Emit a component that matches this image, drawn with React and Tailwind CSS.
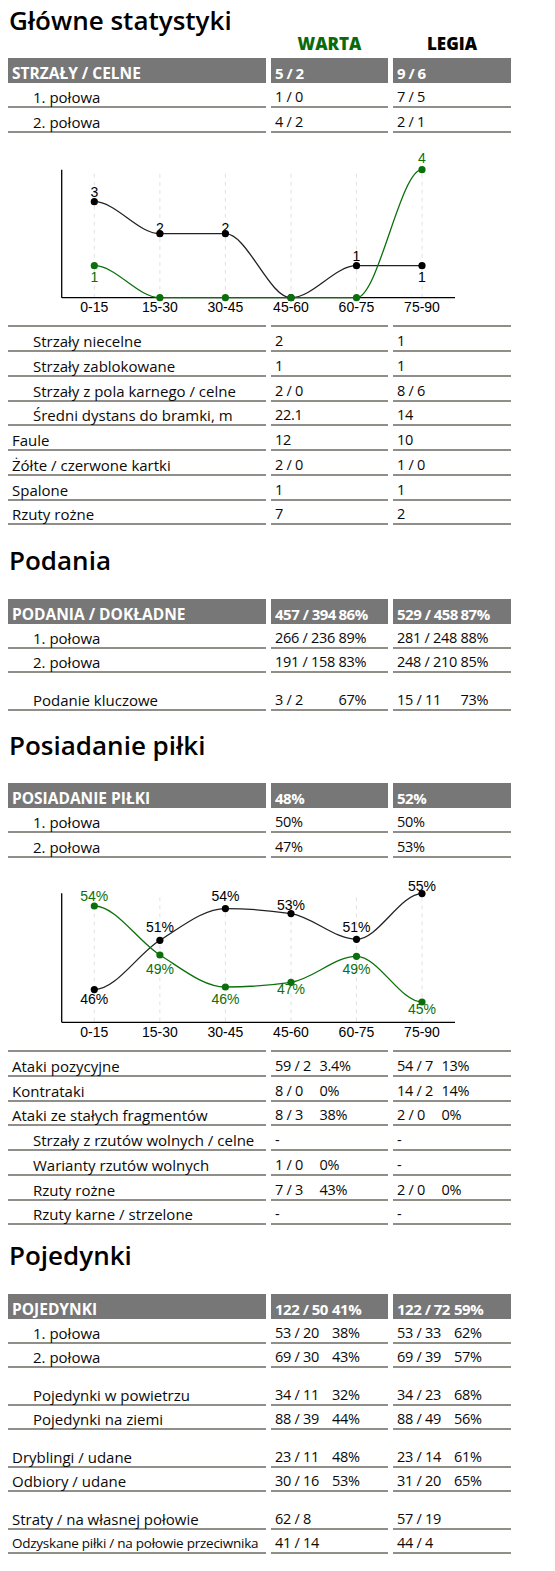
import React from 'react';

const GREEN = '#0b700b';

function monoPath(pts) {
  const n = pts.length;
  const t = new Array(n).fill(0);
  const sg = (v) => (v < 0 ? -1 : 1);
  for (let i = 1; i < n - 1; i++) {
    const [x0, y0] = pts[i - 1];
    const [x1, y1] = pts[i];
    const [x2, y2] = pts[i + 1];
    const h0 = x1 - x0;
    const h1 = x2 - x1;
    const s0 = (y1 - y0) / h0;
    const s1 = (y2 - y1) / h1;
    const p = (s0 * h1 + s1 * h0) / (h0 + h1);
    t[i] = (sg(s0) + sg(s1)) * Math.min(Math.abs(s0), Math.abs(s1), 0.5 * Math.abs(p)) || 0;
  }
  let d = `M${pts[0][0]},${pts[0][1]}`;
  for (let i = 0; i < n - 1; i++) {
    const [x0, y0] = pts[i];
    const [x1, y1] = pts[i + 1];
    const dx = (x1 - x0) / 3;
    d += ` C${x0 + dx},${y0 + dx * t[i]} ${x1 - dx},${y1 - dx * t[i + 1]} ${x1},${y1}`;
  }
  return d;
}

const XS = [94.3, 159.9, 225.4, 291, 356.5, 422];
const XL = ['0-15', '15-30', '30-45', '45-60', '60-75', '75-90'];

function Chart({ black, green, axisTop, axisY, labels }) {
  const bp = black.map((y, i) => [XS[i], y]);
  const gp = green.map((y, i) => [XS[i], y]);
  return (
    <svg className="block ml-[8px]" width="503" height="192.5" viewBox="8 0 503 192.5">
      {XS.map((x) => (
        <line key={x} x1={x} x2={x} y1={axisTop + 4} y2={axisY} stroke="#e2e2e2" strokeWidth="1" strokeDasharray="4 4" />
      ))}
      <line x1="61.7" x2="61.7" y1={axisTop} y2={axisY} stroke="#000" strokeWidth="1.3" />
      <line x1="61.7" x2="455" y1={axisY} y2={axisY} stroke="#000" strokeWidth="1.3" />
      <path d={monoPath(bp)} fill="none" stroke="#222" strokeWidth="1.3" />
      <path d={monoPath(gp)} fill="none" stroke={GREEN} strokeWidth="1.3" />
      {bp.map(([x, y], i) => (
        <circle key={'b' + i} cx={x} cy={y} r="3.6" fill="#000" />
      ))}
      {gp.map(([x, y], i) => (
        <circle key={'g' + i} cx={x} cy={y} r="3.6" fill={GREEN} />
      ))}
      {labels.map((l, i) => (
        <text
          key={'l' + i}
          x={XS[l.i]}
          y={l.y}
          textAnchor="middle"
          fontFamily="'Liberation Sans', Arial, sans-serif"
          fontSize="14"
          fill={l.g ? GREEN : '#000'}
        >
          {l.t}
        </text>
      ))}
      {XL.map((t, i) => (
        <text
          key={t}
          x={XS[i]}
          y={axisY + 14.3}
          textAnchor="middle"
          fontFamily="'Liberation Sans', Arial, sans-serif"
          fontSize="14"
          fill="#000"
        >
          {t}
        </text>
      ))}
    </svg>
  );
}

const GRID = 'grid grid-cols-[258px_117px_118px] gap-x-[5px] ml-[8px] w-[503px]';
const CELL = 'h-[24.75px] border-b-2 border-[#8f8e88] flex items-end leading-[18px] whitespace-nowrap';

function Val({ v, w }) {
  if (Array.isArray(v)) {
    return (
      <>
        <span className={'inline-block ' + w}>{v[0]}</span>
        <span>{v[1]}</span>
      </>
    );
  }
  return <span>{v}</span>;
}

function Row({ label, indent, a, b, w = '', small }) {
  return (
    <div className={GRID}>
      <div className={CELL + (indent ? ' pl-[25px]' : ' pl-[4px]') + (small ? ' text-[13.5px] tracking-[-0.25px]' : ' text-[15px]')}>
        {label}
      </div>
      <div className={CELL + ' pl-[4px] tracking-[-0.3px]'}>
        <Val v={a} w={w} />
      </div>
      <div className={CELL + ' pl-[4px] tracking-[-0.3px]'}>
        <Val v={b} w={w} />
      </div>
    </div>
  );
}

function Head({ label, a, b, w = '' }) {
  const c = 'h-[25px] bg-[#777777] text-white font-bold leading-[16px] flex items-end pb-[2px] pl-[4px] whitespace-nowrap';
  return (
    <div className={GRID}>
      <div className={c + ' text-[15.5px]'}>{label}</div>
      <div className={c + ' text-[15px] tracking-[-0.5px]'}>
        <Val v={a} w={w} />
      </div>
      <div className={c + ' text-[15px] tracking-[-0.5px]'}>
        <Val v={b} w={w} />
      </div>
    </div>
  );
}

function LineRow() {
  const c = 'border-b-2 border-[#8f8e88]';
  return (
    <div className={GRID}>
      <div className={c} />
      <div className={c} />
      <div className={c} />
    </div>
  );
}

function Title({ children, mt = '' }) {
  return (
    <h2 className={'pl-[9px] pt-[4px] h-[36px] text-[26px] leading-[32px] font-semibold text-black ' + mt}>{children}</h2>
  );
}

function Spacer() {
  return <div className="h-[12.5px]" />;
}

export default function App() {
  const c1top = 132.3;
  const ch1 = (v) => 297 - 32 * v - c1top;
  const lab1 = [
    { i: 0, y: 196.7 - c1top, t: '3' },
    { i: 0, y: 281.3 - c1top, t: '1', g: true },
    { i: 1, y: 232.3 - c1top, t: '2' },
    { i: 2, y: 232.3 - c1top, t: '2' },
    { i: 4, y: 260 - c1top, t: '1' },
    { i: 5, y: 162.7 - c1top, t: '4', g: true },
    { i: 5, y: 281.3 - c1top, t: '1' },
  ];
  const c2top = 857.7;
  const bl2 = [989.3, 940, 908.3, 913.3, 939, 893.3].map((y) => y - c2top);
  const gr2 = [905.7, 954.7, 986.7, 982, 956, 1001.7].map((y) => y - c2top);
  const lab2 = [
    { i: 0, y: 900.7, t: '54%', g: true },
    { i: 0, y: 1004, t: '46%' },
    { i: 1, y: 931.7, t: '51%' },
    { i: 1, y: 973.3, t: '49%', g: true },
    { i: 2, y: 900.7, t: '54%' },
    { i: 2, y: 1004, t: '46%', g: true },
    { i: 3, y: 910, t: '53%' },
    { i: 3, y: 993.3, t: '47%', g: true },
    { i: 4, y: 931.7, t: '51%' },
    { i: 4, y: 973.3, t: '49%', g: true },
    { i: 5, y: 890.7, t: '55%' },
    { i: 5, y: 1014, t: '45%', g: true },
  ].map((l) => ({ ...l, y: l.y - c2top }));

  const wP = 'w-[63.5px]';
  const wA = 'w-[44.5px]';
  const wD = 'w-[57px]';

  return (
    <div className="w-[555px] min-h-[1571px] bg-white text-[14.5px] font-medium text-[#0a0a0a]" style={{ fontFamily: "'Open Sans', 'Noto Sans', sans-serif" }}>
      <Title>Główne statystyki</Title>
      <div className={GRID + ' h-[22.3px]'}>
        <div />
        <div className="flex items-end justify-center pb-[7px] font-extrabold text-[17px] leading-[16px]" style={{ color: '#0a6a0a' }}>
          WARTA
        </div>
        <div className="flex items-end justify-center pb-[7px] font-extrabold text-[17px] leading-[16px] text-black">
          LEGIA
        </div>
      </div>
      <Head label="STRZAŁY / CELNE" a="5 / 2" b="9 / 6" />
      <Row indent label="1. połowa" a="1 / 0" b="7 / 5" />
      <Row indent label="2. połowa" a="4 / 2" b="2 / 1" />
      <Chart black={[3, 2, 2, 0, 1, 1].map(ch1)} green={[1, 0, 0, 0, 0, 4].map(ch1)} axisTop={169 - c1top} axisY={297 - c1top} labels={lab1} />
      <LineRow />
      <Row indent label="Strzały niecelne" a="2" b="1" />
      <Row indent label="Strzały zablokowane" a="1" b="1" />
      <Row indent label="Strzały z pola karnego / celne" a="2 / 0" b="8 / 6" />
      <Row indent label="Średni dystans do bramki, m" a="22.1" b="14" />
      <Row label="Faule" a="12" b="10" />
      <Row label="Żółte / czerwone kartki" a="2 / 0" b="1 / 0" />
      <Row label="Spalone" a="1" b="1" />
      <Row label="Rzuty rożne" a="7" b="2" />

      <Title mt="mt-[15px]">Podania</Title>
      <div className="h-[22.5px]" />
      <Head label="PODANIA / DOKŁADNE" a={['457 / 394', '86%']} b={['529 / 458', '87%']} w={wP} />
      <Row indent label="1. połowa" a={['266 / 236', '89%']} b={['281 / 248', '88%']} w={wP} />
      <Row indent label="2. połowa" a={['191 / 158', '83%']} b={['248 / 210', '85%']} w={wP} />
      <Spacer />
      <Row indent label="Podanie kluczowe" a={['3 / 2', '67%']} b={['15 / 11', '73%']} w={wP} />

      <Title mt="mt-[14px]">Posiadanie piłki</Title>
      <div className="h-[22.5px]" />
      <Head label="POSIADANIE PIŁKI" a="48%" b="52%" />
      <Row indent label="1. połowa" a="50%" b="50%" />
      <Row indent label="2. połowa" a="47%" b="53%" />
      <Chart black={bl2} green={gr2} axisTop={893 - c2top} axisY={1022 - c2top} labels={lab2} />
      <LineRow />
      <Row label="Ataki pozycyjne" a={['59 / 2', '3.4%']} b={['54 / 7', '13%']} w={wA} />
      <Row label="Kontrataki" a={['8 / 0', '0%']} b={['14 / 2', '14%']} w={wA} />
      <Row label="Ataki ze stałych fragmentów" a={['8 / 3', '38%']} b={['2 / 0', '0%']} w={wA} />
      <Row indent label="Strzały z rzutów wolnych / celne" a="-" b="-" />
      <Row indent label="Warianty rzutów wolnych" a={['1 / 0', '0%']} b="-" w={wA} />
      <Row indent label="Rzuty rożne" a={['7 / 3', '43%']} b={['2 / 0', '0%']} w={wA} />
      <Row indent label="Rzuty karne / strzelone" a="-" b="-" />

      <Title mt="mt-[10px]">Pojedynki</Title>
      <div className="h-[22.5px]" />
      <Head label="POJEDYNKI" a={['122 / 50', '41%']} b={['122 / 72', '59%']} w={wD} />
      <Row indent label="1. połowa" a={['53 / 20', '38%']} b={['53 / 33', '62%']} w={wD} />
      <Row indent label="2. połowa" a={['69 / 30', '43%']} b={['69 / 39', '57%']} w={wD} />
      <Spacer />
      <Row indent label="Pojedynki w powietrzu" a={['34 / 11', '32%']} b={['34 / 23', '68%']} w={wD} />
      <Row indent label="Pojedynki na ziemi" a={['88 / 39', '44%']} b={['88 / 49', '56%']} w={wD} />
      <Spacer />
      <Row label="Dryblingi / udane" a={['23 / 11', '48%']} b={['23 / 14', '61%']} w={wD} />
      <Row label="Odbiory / udane" a={['30 / 16', '53%']} b={['31 / 20', '65%']} w={wD} />
      <Spacer />
      <Row label="Straty / na własnej połowie" a="62 / 8" b="57 / 19" />
      <Row small label="Odzyskane piłki / na połowie przeciwnika" a="41 / 14" b="44 / 4" />
    </div>
  );
}
